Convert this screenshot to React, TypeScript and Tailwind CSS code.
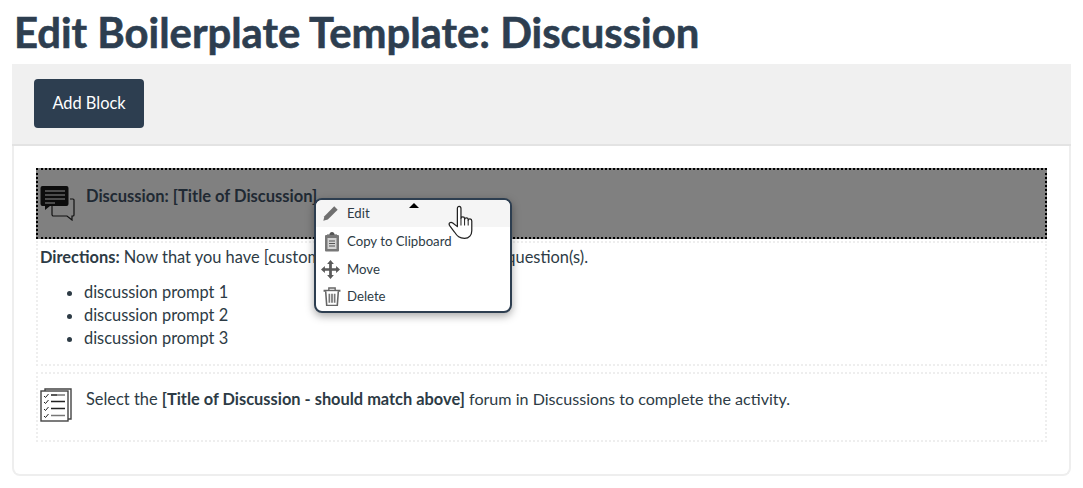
import React from 'react'

const navy = '#2d3e50'

const ChatIcon = () => (
  <svg width="36" height="36" viewBox="0 0 36 36" className="shrink-0">
    <path d="M12 20v9.500a1.500 1.500 0 0 0 1.500 1.500H27l5 4v-4h1a1 1 0 0 0 1-1V15a1 1 0 0 0-1-1h-3" fill="none" stroke="#111" strokeWidth="1.200" />
    <path d="M2.500 1h24A2 2 0 0 1 28.500 3v16a2 2 0 0 1-2 2H10l-5 4v-4H2.500a2 2 0 0 1-2-2V3a2 2 0 0 1 2-2z" fill="#0c0c0c" />
    <path d="M5 6h20M5 10h20M5 14h20M5 18h10" stroke="#8a8a8a" strokeWidth="1.200" />
  </svg>
)

const ChecklistIcon = () => (
  <svg width="32" height="34" viewBox="0 0 32 34" className="shrink-0">
    <path d="M5 3V1h26v30h-3" fill="#fff" stroke="#444" strokeWidth="1.400" />
    <rect x="1" y="3" width="27" height="30" fill="#fff" stroke="#444" strokeWidth="1.400" />
    <path d="M4 8l1.500 1.500L8.500 6M4 14l1.500 1.500L8.500 12M4 21l1.500 1.500L8.500 19M4 28l1.500 1.500L8.500 26" fill="none" stroke="#222" strokeWidth="1" />
    <path d="M11 7h6M11 13.500h14M11 20.500h14" stroke="#222" strokeWidth="1.300" />
    <path d="M17 7h8M11 27.500h14" stroke="#777" strokeWidth="1.300" />
  </svg>
)

const PencilIcon = () => (
  <svg width="15" height="15" viewBox="0 0 14 14" className="-ml-[3px]">
    <path d="M10.500.3l3.200 3.200-9.200 9.200L.3 13.700l1-4.200z" fill="#6f6f6f" />
  </svg>
)

const ClipboardIcon = () => (
  <svg width="16" height="20" viewBox="0 0 16 20">
    <path d="M5.500 2.500C5.500 1 6.500 0 8 0s2.500 1 2.500 2.500H13v2H3v-2z" fill="#555" />
    <rect x="1" y="3" width="14" height="16.500" rx="1" fill="#777" />
    <rect x="3.500" y="6" width="9" height="11" fill="#d4d4d4" />
    <path d="M5 9h6M5 11.500h6M5 14h6" stroke="#555" strokeWidth="1.100" />
  </svg>
)

const MoveIcon = () => (
  <svg width="19" height="19" viewBox="0 0 18 18" className="-ml-[2px]">
    <path d="M9 0l3.200 3.700H10.300V7.700H14.300V5.800L18 9l-3.700 3.200v-1.900H10.300v4H12.200L9 18l-3.200-3.700h1.900v-4H3.700v1.900L0 9l3.700-3.200v1.900H7.700v-4H5.800z" fill="#5a5a5a" />
  </svg>
)

const TrashIcon = () => (
  <svg width="18" height="19" viewBox="0 0 17 18" className="ml-[1px]">
    <path d="M.5 3.500h16" fill="none" stroke="#666" strokeWidth="2" />
    <path d="M5.500 3V1h6v2" fill="none" stroke="#666" strokeWidth="1.300" />
    <path d="M2.500 4l1 13.500h10l1-13.500" fill="#fff" stroke="#666" strokeWidth="1.500" />
    <path d="M6 6.500v8.500M8.500 6.500v8.500M11 6.500v8.500" stroke="#777" strokeWidth="1.600" />
  </svg>
)

const HandCursor = () => (
  <svg width="28" height="35" viewBox="0 0 27 34" className="absolute left-[132px] top-[5px]">
    <path d="M9 3.500c0-3 3.500-3 3.500 0V13c0-2 3.500-2 3.500 0v1c0-2 3.500-2 3.500 0v1c0-2 3.500-2 3.500 .5V25c0 4-2.500 7.500-7 7.500-5 0-7-2-10-6.500L1.500 20c-1.500-2.500 1-4 3-2.500L9 21z" fill="#fff" stroke="#222" strokeWidth="1.200" strokeLinejoin="round" />
    <path d="M12.500 13v7M16 14v6M19.500 15v5" stroke="#222" strokeWidth="1" />
  </svg>
)

const items = [
  { label: 'Edit', icon: <PencilIcon />, rowClass: 'h-[27px] bg-[#f5f5f5]' },
  { label: 'Copy to Clipboard', icon: <ClipboardIcon />, rowClass: 'h-[27.500px] pt-[2px]' },
  { label: 'Move', icon: <MoveIcon />, rowClass: 'h-[27.500px] pt-[3px]' },
  { label: 'Delete', icon: <TrashIcon />, rowClass: 'h-[27.500px] pt-[2px]' },
]

const ContextMenu = () => (
  <div className="absolute left-[300px] top-[52px] z-10 w-[198px] h-[115px] bg-white border-2 border-[#2d3e50] rounded-lg shadow-[0_3px_8px_rgba(0,0,0,0.35)] overflow-hidden">
    {items.map((item) => (
      <div key={item.label} className={`flex items-center text-[13.200px] text-[#2d3b45] ${item.rowClass}`}>
        <span className="w-[31px] flex justify-center shrink-0">{item.icon}</span>
        <span>{item.label}</span>
      </div>
    ))}
    <span className="absolute left-[93px] top-[3px] w-0 h-0 border-x-[5px] border-x-transparent border-b-[5px] border-b-black" />
    <HandCursor />
  </div>
)

export default function App() {
  return (
    <div className="w-[1083px] h-[488px] bg-white overflow-hidden font-['Lato','Liberation_Sans',sans-serif] text-[16.400px] text-[#2d3b45]">
      <h1 className="h-[64px] pl-[14px] pt-[8px] text-[41.800px] leading-[48px] font-bold [-webkit-text-stroke:0.6px_#2d3e50]" style={{ color: navy }}>
        Edit Boilerplate Template: Discussion
      </h1>
      <div className="ml-[12px] w-[1059px] h-[412px] border-2 border-t-0 border-[#eeeeee] rounded-b-lg">
        <div className="h-[82px] -mx-[2px] bg-[#f0f0f0] border-b-2 border-[#e3e3e3] pl-[22px] pt-[15px]">
          <button className="w-[110px] h-[49px] rounded bg-[#2d3e50] text-white text-[16.400px] leading-[44px] pb-[1px] align-top">Add Block</button>
        </div>
        <div className="relative pt-[22px] pl-[22px] pr-[22px]">
          <div className="h-[71px] border-2 border-dotted border-black bg-[#808080] flex items-start gap-[10px] pl-[2px] pt-[15px] font-bold text-[#1f2933]">
            <ChatIcon />
            <span className="leading-[24px] -mt-[1px] text-[16.500px]">Discussion: [Title of Discussion]</span>
          </div>
          <div className="mt-[2px] h-[125px] border-2 border-dotted border-[#eeeeee] pl-[2px] pt-[2px] leading-[23px]">
            <p><strong>Directions:</strong> Now that you have [customize these], respond to the question(s).</p>
            <ul className="list-disc pl-[44px] mt-[12px]">
              <li>discussion prompt 1</li>
              <li>discussion prompt 2</li>
              <li>discussion prompt 3</li>
            </ul>
          </div>
          <div className="mt-[6px] h-[70px] border-2 border-dotted border-[#eeeeee] flex items-start gap-[14px] pl-[2px] pt-[14px]">
            <ChecklistIcon />
            <p className="leading-[24px] -mt-[1px]">Select the <strong>[Title of Discussion - should match above]</strong> <span className="text-[16.100px]">forum in Discussions to complete the activity.</span></p>
          </div>
          <ContextMenu />
        </div>
      </div>
    </div>
  )
}
